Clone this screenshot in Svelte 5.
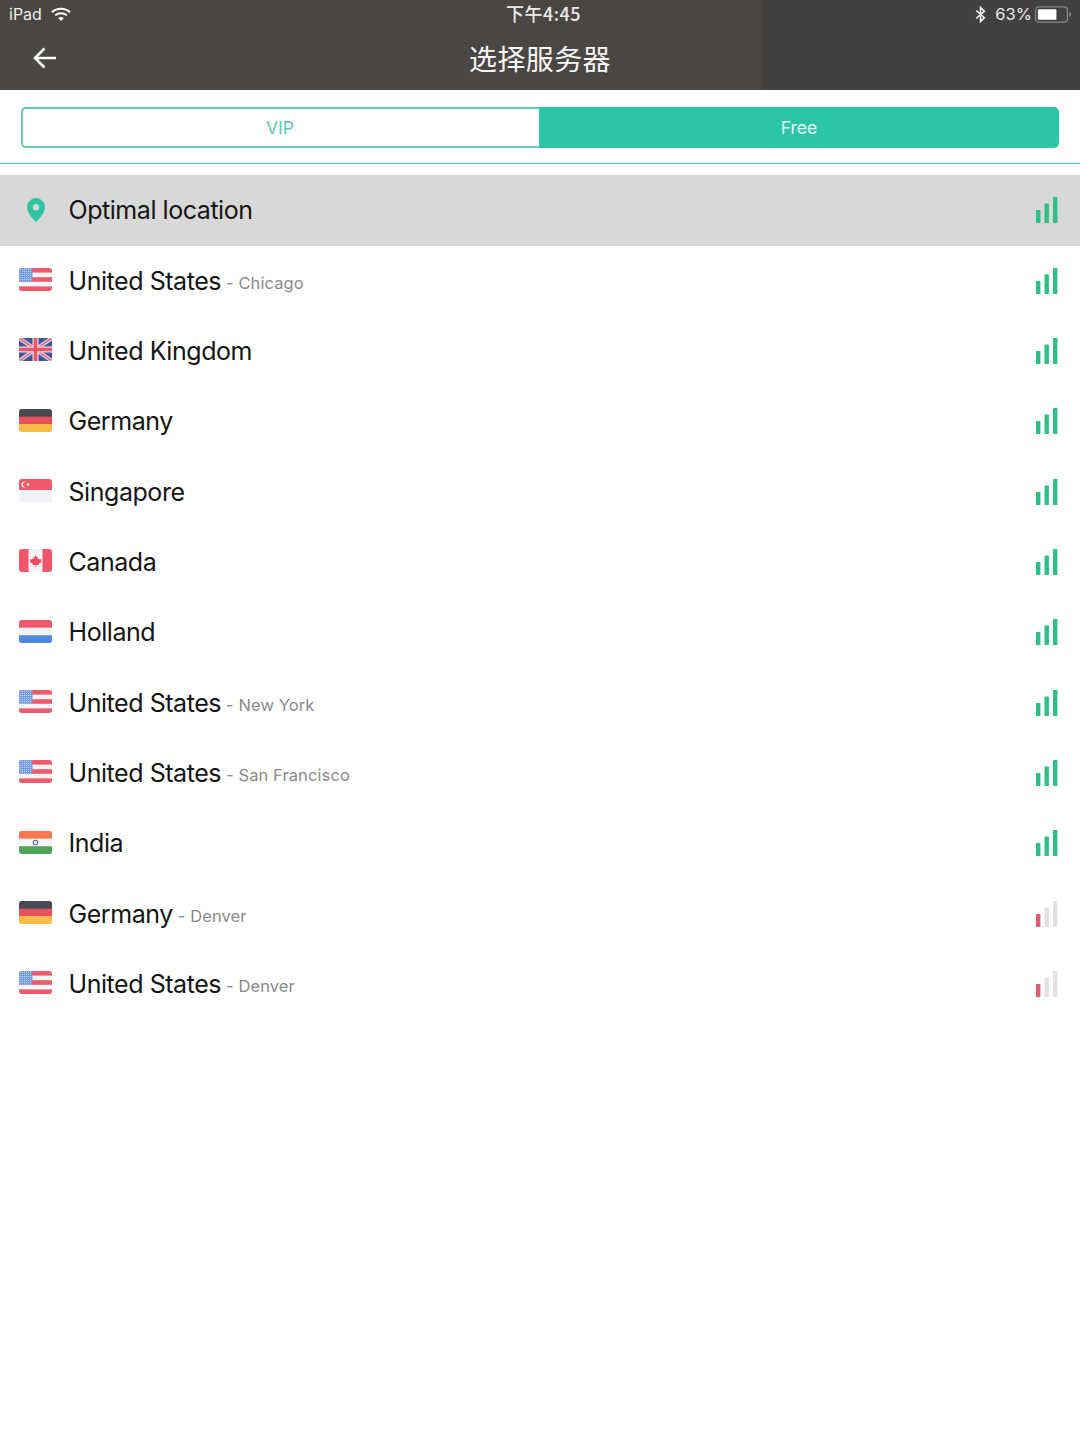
<script>
  const rows = [
    { flag: 'us', name: 'United States', city: 'Chicago' },
    { flag: 'uk', name: 'United Kingdom' },
    { flag: 'de', name: 'Germany' },
    { flag: 'sg', name: 'Singapore' },
    { flag: 'ca', name: 'Canada' },
    { flag: 'nl', name: 'Holland' },
    { flag: 'us', name: 'United States', city: 'New York' },
    { flag: 'us', name: 'United States', city: 'San Francisco' },
    { flag: 'in', name: 'India' },
    { flag: 'de', name: 'Germany', city: 'Denver', weak: true },
    { flag: 'us', name: 'United States', city: 'Denver', weak: true }
  ];
  const stripes = [0, 1, 2];
  const stars = [];
  for (let y = 1.2; y < 14; y += 2.1) for (let x = 1.2; x < 13; x += 2.1) stars.push([x, y]);
</script>

{#snippet signal(weak)}
  <svg class="signal" viewBox="0 0 22 26" width="22" height="26" aria-hidden="true">
    <rect x="0" y="13" width="4.4" height="13" rx="0.6" fill={weak ? '#e15c70' : '#2cc084'} />
    <rect x="8.5" y="6.500" width="4.4" height="19.500" rx="0.6" fill={weak ? '#e2e2e2' : '#2cc084'} />
    <rect x="17" y="0" width="4.4" height="26" rx="0.6" fill={weak ? '#e2e2e2' : '#2cc084'} />
  </svg>
{/snippet}

{#snippet flag(kind)}
  <svg class="flag" viewBox="0 0 33 23" width="33" height="23" aria-hidden="true">
    <defs><clipPath id={'c-' + kind}><rect width="33" height="23" rx="3" /></clipPath></defs>
    <g clip-path={'url(#c-' + kind + ')'}>
      {#if kind === 'us'}
        <rect width="33" height="23" fill="#f5f5f8" />
        {#each stripes as i}
          <rect y={i * 9.2} width="33" height="4.600" fill="#ee5a6e" />
        {/each}
        <rect width="13.500" height="13.800" fill="#6a97e0" />
        {#each stars as s}
          <circle cx={s[0]} cy={s[1]} r="0.6" fill="#dde6f8" />
        {/each}
      {:else if kind === 'uk'}
        <rect width="33" height="23" fill="#43549c" />
        <path d="M0 0L33 23M33 0L0 23" stroke="#d9c9dc" stroke-width="4" />
        <path d="M0 0L33 23M33 0L0 23" stroke="#e8627a" stroke-width="1.400" />
        <path d="M16.500 0V23M0 11.500H33" stroke="#eadfe6" stroke-width="6" />
        <path d="M16.500 0V23M0 11.500H33" stroke="#ec5468" stroke-width="3.600" />
      {:else if kind === 'de'}
        <rect width="33" height="8" fill="#474a55" />
        <rect y="7.700" width="33" height="7.600" fill="#e8505b" />
        <rect y="15.300" width="33" height="7.700" fill="#fbbc45" />
      {:else if kind === 'sg'}
        <rect width="33" height="23" fill="#f3f4f9" />
        <rect width="33" height="11" fill="#f0596c" />
        <circle cx="5.500" cy="5.500" r="3" fill="#f7f7fa" />
        <circle cx="6.800" cy="5.500" r="2.800" fill="#f0596c" />
        <circle cx="9" cy="5.500" r="1.300" fill="#f7f7fa" />
      {:else if kind === 'ca'}
        <rect width="33" height="23" fill="#f4f4f8" />
        <rect width="9.500" height="23" fill="#f0566a" />
        <rect x="23.500" width="9.500" height="23" fill="#f0566a" />
        <path d="M16.500 6l1.200 2.200 1.300-.6-.5 3 1.500-1 .5 1 2-.3-.6 2 .8.5-3.200 2.300.3 1.200-2.700-.4V18h-.8v-2.100l-2.700.4.3-1.200-3.200-2.300.8-.5-.6-2 2 .3.5-1 1.500 1-.5-3 1.300.6z" fill="#ec4a60" />
      {:else if kind === 'nl'}
        <rect width="33" height="8" fill="#f0596c" />
        <rect y="7.700" width="33" height="7.600" fill="#f5f5f9" />
        <rect y="15.300" width="33" height="7.700" fill="#4f8ade" />
      {:else if kind === 'in'}
        <rect width="33" height="8" fill="#fb7a4f" />
        <rect y="7.700" width="33" height="7.600" fill="#f5f5f9" />
        <rect y="15.300" width="33" height="7.700" fill="#4fa35b" />
        <circle cx="16.500" cy="11.500" r="2.200" fill="none" stroke="#4a5fa8" stroke-width="1.100" />
      {/if}
    </g>
  </svg>
{/snippet}

<div class="page">
  <header class="top">
    <div class="status">
      <div class="side">
        <span>iPad</span>
        <svg class="wifi" viewBox="0 0 20 15" width="20" height="15" aria-hidden="true">
          <path d="M1 5.200C6 .6 14 .6 19 5.200" fill="none" stroke="#fff" stroke-width="2.100" />
          <path d="M4.200 8.300C7.400 5.500 12.600 5.500 15.800 8.300" fill="none" stroke="#fff" stroke-width="2.100" />
          <path d="M7.200 11C8.800 9.700 11.200 9.700 12.800 11L10 14z" fill="#fff" />
        </svg>
      </div>
      <div class="clock">下午4:45</div>
      <div class="side right">
        <svg class="bt" viewBox="0 0 10 16" width="11" height="17" aria-hidden="true">
          <path d="M1 4.400L8.600 11 5 14.600V1.400L8.600 5 1 11.600" fill="none" stroke="#f2f2f2" stroke-width="1.500" />
        </svg>
        <span class="pct">63%</span>
        <svg class="batt" viewBox="0 0 38 17" width="37" height="17" aria-hidden="true">
          <rect x="0.7" y="0.7" width="32.600" height="15.600" rx="3" fill="none" stroke="#8b8987" stroke-width="1.200" />
          <rect x="3" y="3" width="19" height="11" rx="1" fill="#fff" />
          <path d="M35 6c1.400.3 2 1.200 2 2.500S36.400 10.700 35 11z" fill="#8b8987" />
        </svg>
      </div>
    </div>
    <div class="nav">
      <svg class="back" viewBox="0 0 24 22" width="24" height="22" aria-hidden="true">
        <path d="M23 11H2.500M11.500 1.500L2 11l9.500 9.500" fill="none" stroke="#fff" stroke-width="2.600" />
      </svg>
      <h1>选择服务器</h1>
    </div>
  </header>

  <div class="tabs">
    <div class="tab vip">VIP</div>
    <div class="tab free">Free</div>
  </div>

  <div class="rule"></div>

  <ul class="list">
    <li class="row active">
      <span class="lead">
        <svg class="pin" viewBox="0 0 18 24" width="18" height="24" aria-hidden="true">
          <path fill-rule="evenodd" d="M9 0a9 9 0 0 1 9 9c0 5.500-5.500 11.500-9 15C5.500 20.500 0 14.500 0 9a9 9 0 0 1 9-9zm0 6a3.200 3.200 0 1 0 0 6.400A3.200 3.200 0 0 0 9 6z" fill="#2cc5a6" />
        </svg>
      </span>
      <span class="name">Optimal location</span>
      {@render signal(false)}
    </li>
    {#each rows as r}
      <li class="row">
        <span class="lead">{@render flag(r.flag)}</span>
        <span class="name">{r.name}</span>
        {#if r.city}<span class="city">- {r.city}</span>{/if}
        {@render signal(r.weak)}
      </li>
    {/each}
  </ul>
</div>

<style>
  :global(body) {
    margin: 0;
    background: #fff;
  }
  .page {
    width: 1080px;
    height: 1440px;
    background: #fff;
    font-family: Inter, "Noto Sans CJK SC", sans-serif;
    overflow: hidden;
  }
  .top {
    height: 90px;
    background: linear-gradient(90deg, #4a4644 0 762px, #434140 762px);
    color: #fff;
    display: flex;
    flex-direction: column;
  }
  .status {
    height: 28px;
    padding: 0 8px 0 9px;
    display: grid;
    grid-template-columns: 1fr auto 1fr;
    align-items: center;
    font-size: 16px;
    color: #ececec;
  }
  .side {
    display: flex;
    align-items: center;
    gap: 9px;
  }
  .side.right {
    justify-content: flex-end;
    gap: 3px;
  }
  .bt { margin-right: 6px; }
  .pct { font-size: 16.500px; }
  .clock {
    font-size: 18px;
    font-weight: 500;
    margin: -2px 0 0 6px;
    letter-spacing: 0.500px;
    font-family: "Noto Sans CJK SC", sans-serif;
  }
  .nav {
    flex: 1;
    position: relative;
    display: flex;
    align-items: center;
    justify-content: center;
  }
  .back {
    position: absolute;
    left: 33px;
    top: 19px;
  }
  h1 {
    margin: 0 0 3px;
    font-size: 28px;
    font-weight: 400;
    letter-spacing: 0.400px;
    color: #f6f6f6;
    font-family: "Noto Sans CJK SC", sans-serif;
  }
  .tabs {
    margin: 17px 21px 0;
    height: 41px;
    display: flex;
    font-size: 17.500px;
  }
  .tab {
    display: flex;
    align-items: center;
    justify-content: center;
    box-sizing: border-box;
  }
  .vip {
    width: 518px;
    padding-right: 2px;
    color: #5cc7b5;
    border: 2px solid #62c9b8;
    border-right: 0;
    border-radius: 5px 0 0 5px;
  }
  .free {
    width: 520px;
    background: #2cc5a6;
    color: #e2fbf4;
    border-radius: 0 5px 5px 0;
  }
  .rule {
    height: 1px;
    margin-top: 15px;
    background: #4cc4b0;
  }
  .list {
    list-style: none;
    margin: 0;
    padding: 11.200px 0 0;
  }
  .row {
    height: 70.330px;
    display: flex;
    align-items: center;
    padding: 0 22.500px 0 19px;
    color: #151515;
  }
  .active { background: #d8d8d8; }
  .lead {
    width: 49.500px;
    display: flex;
    align-items: center;
  }
  .flag {
    margin-top: -2.500px;
    filter: drop-shadow(0 0.6px 0.6px rgba(0, 0, 0, 0.25));
  }
  .pin { margin-left: 8px; }
  .name { font-size: 25px; letter-spacing: -0.450px; }
  .city {
    font-size: 16.500px;
    color: #8a8a8a;
    margin: 5px 0 0 5px;
    letter-spacing: 0.100px;
  }
  .signal {
    margin-left: auto;
  }
</style>
